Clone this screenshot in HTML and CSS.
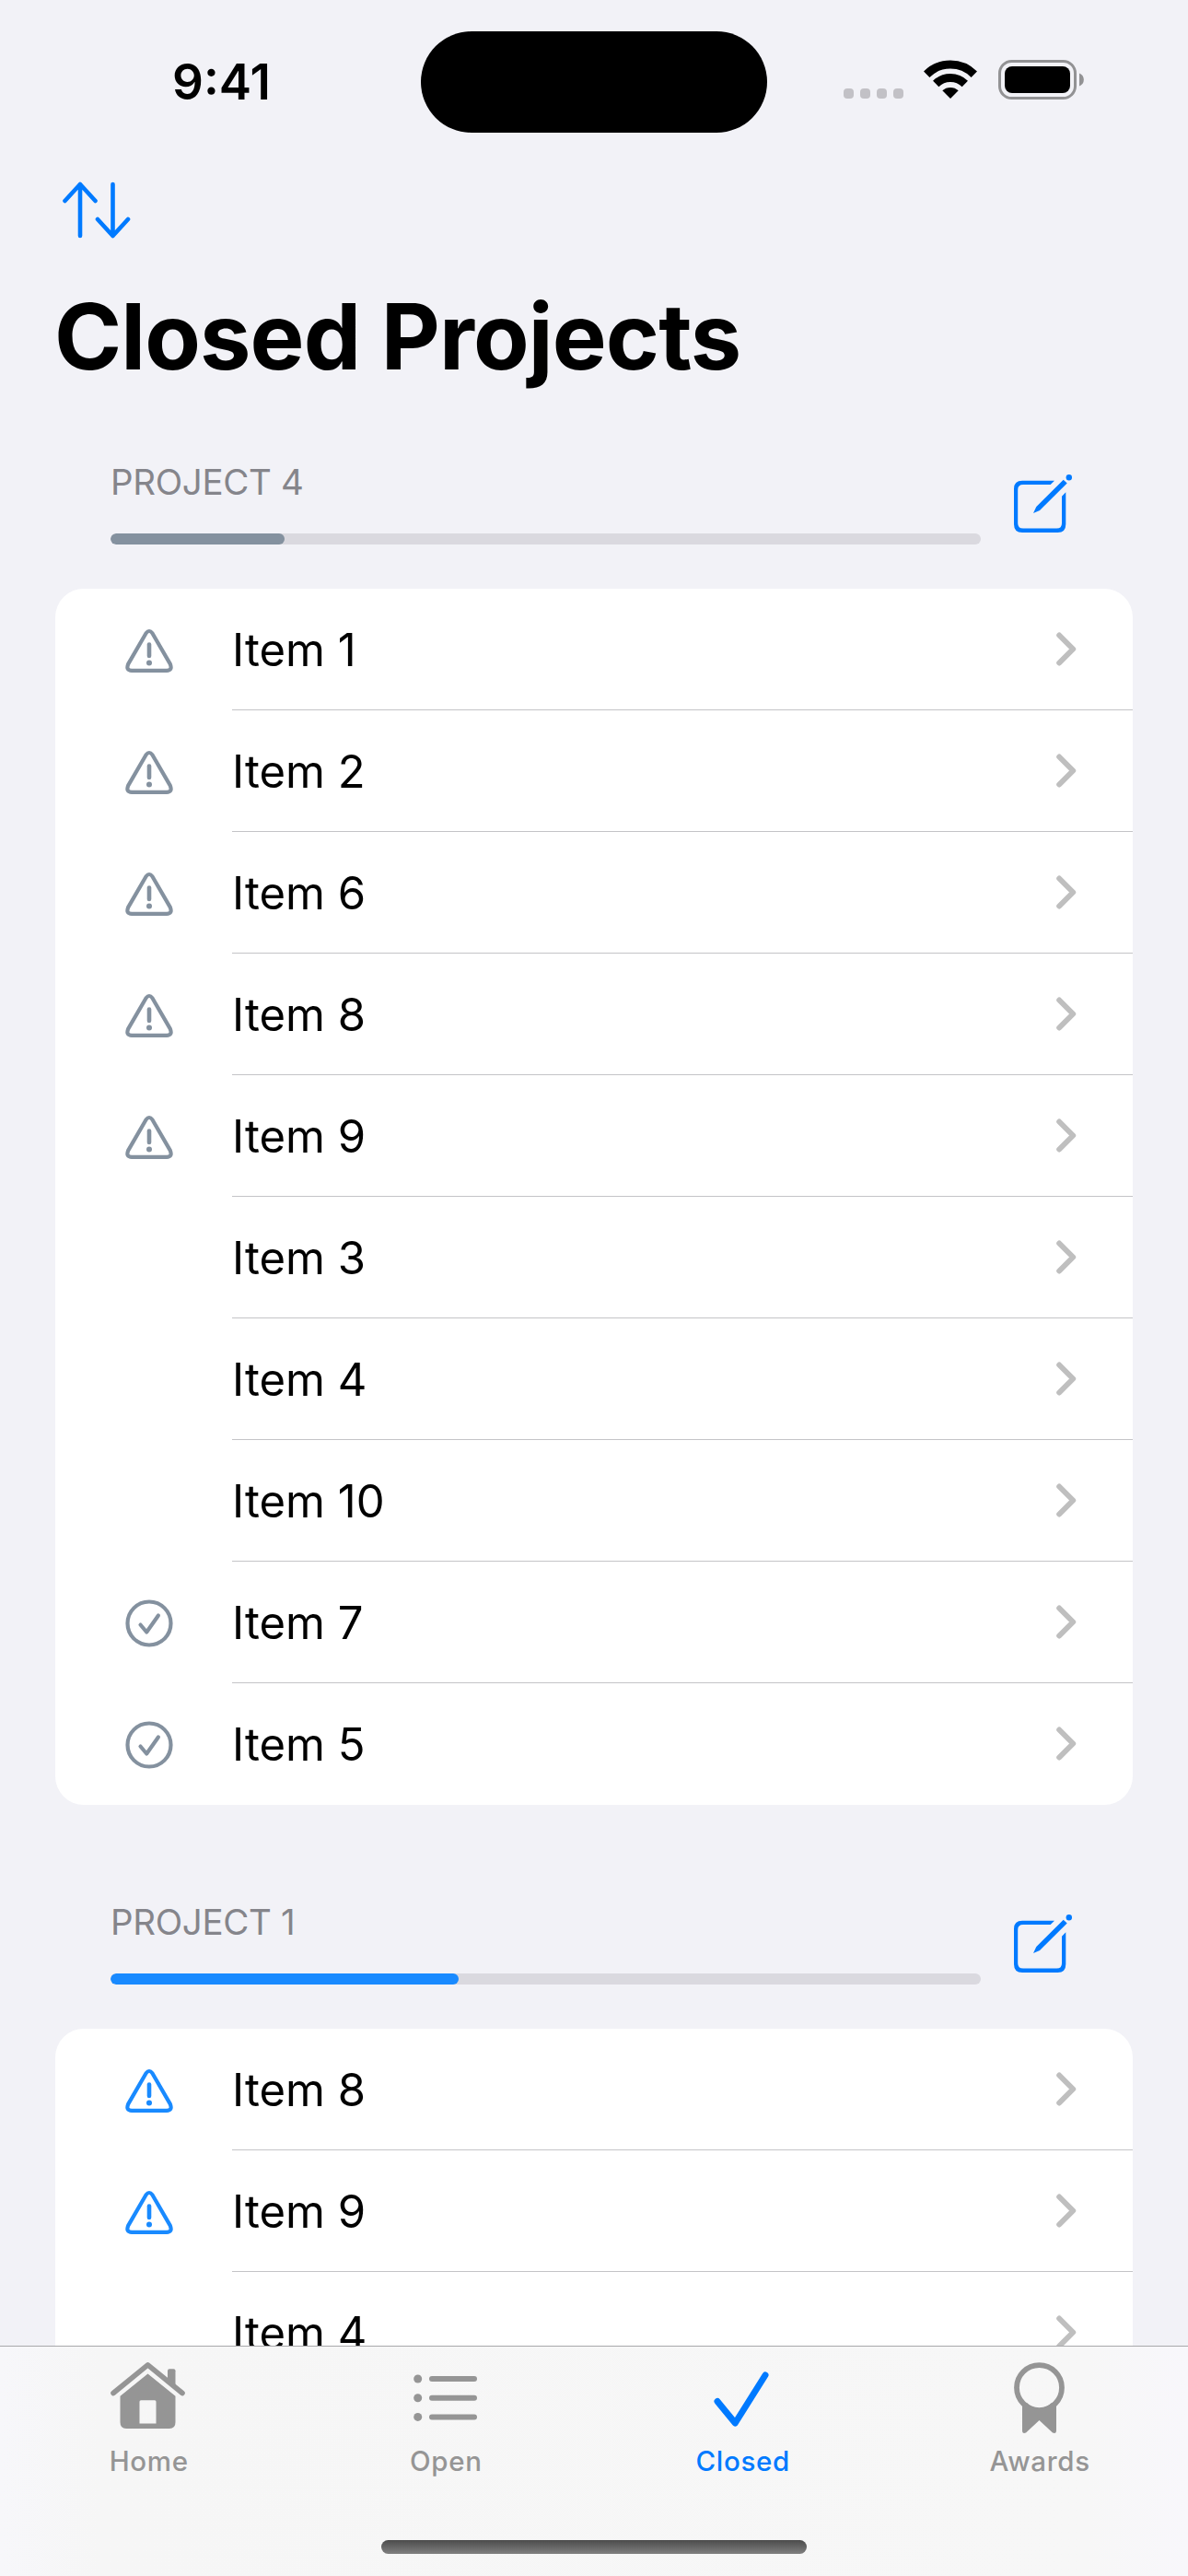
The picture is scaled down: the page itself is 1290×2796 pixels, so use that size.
FILE: index.html
```html
<!DOCTYPE html>
<html lang="en">
<head>
<meta charset="utf-8">
<title>Closed Projects</title>
<link rel="stylesheet" href="styles.css">
</head>
<body>
<svg class="defs" aria-hidden="true">
  <symbol id="warning" viewBox="0 0 54 50"><path d="M23.6 5.2 4.1 38.9Q1.5 45.7 8 45.8H46Q52.500 45.700 49.900 38.900L30.400 5.200Q27 .8 23.600 5.200Z" fill="none" stroke="currentColor" stroke-width="4.200" stroke-linejoin="round"/><path d="M27 17.500V30" stroke="currentColor" stroke-width="4.600" stroke-linecap="round"/><circle cx="27" cy="37.500" r="3" fill="currentColor"/></symbol>
  <symbol id="done" viewBox="0 0 54 54"><circle cx="27" cy="27" r="23.500" fill="none" stroke="currentColor" stroke-width="4.200"/><path d="m17.500 28.500 6.700 8 12.700-18" fill="none" stroke="currentColor" stroke-width="4.200" stroke-linecap="round" stroke-linejoin="round"/></symbol>
  <symbol id="chevron" viewBox="0 0 24 38"><path d="m4.200 3.500 15 15-15 15" fill="none" stroke="currentColor" stroke-width="6" stroke-linecap="round" stroke-linejoin="round"/></symbol>
  <symbol id="compose" viewBox="0 0 66 66"><path d="M45 6.700 40.700 11H11Q5.200 11 5.200 16.500V53Q5.200 58.500 11 58.500H47.500Q53 58.500 53 53V23.800L57.300 19.300V54Q57.300 63 48.500 63H10Q1 63 1 54V15.500Q1 6.700 10 6.700Z" fill="currentColor"/><path d="m54.700 5.700 4 3.800L29 39 22 42l3.300-7z" fill="currentColor"/><circle cx="60.800" cy="3.200" r="3.200" fill="currentColor"/></symbol>
</svg>
<div class="screen">
  <header class="status">
    <div class="time">9:41</div>
    <div class="island"></div>
    <div class="indicators">
      <div class="signal"><i></i><i></i><i></i><i></i></div>
      <svg class="wifi" viewBox="0 0 58 43"><g fill="none" stroke="#000" stroke-width="9"><path d="M3.200 15.700a36.500 36.500 0 0 1 51.600 0"/><path d="M13.200 26a22.500 22.500 0 0 1 31.600 0"/></g><path d="M20.300 33.300a13 13 0 0 1 17.400 0L29 42z"/></svg>
      <svg class="battery" viewBox="0 0 95 43"><rect x="1.500" y="1.500" width="82" height="40" rx="13" fill="none" stroke="#929294" stroke-width="3"/><rect x="7" y="7" width="71" height="29" rx="8"/><path d="M88 14.500a7.500 7.500 0 0 1 0 14z" fill="#929294"/></svg>
    </div>
  </header>
  <nav class="toolbar"><svg class="sort" viewBox="0 0 76 62"><path d="M20 59V3M3.500 21 20 3l16.500 18M55.500 3v56M39 41l16.500 18L72 41" fill="none" stroke="currentColor" stroke-width="4.600" stroke-linecap="round" stroke-linejoin="round"/></svg></nav>
  <h1 class="title">Closed Projects</h1>
  <main class="list">
    <section class="project gray">
      <div class="head"><div class="meta"><h2 class="name">PROJECT 4</h2><div class="track"><div class="fill" style="width:20%"></div></div></div><svg class="edit"><use href="#compose"/></svg></div>
      <ul class="card">
        <li class="row"><svg class="state"><use href="#warning"/></svg><div class="cell"><span>Item 1</span><svg class="chev"><use href="#chevron"/></svg></div></li>
        <li class="row"><svg class="state"><use href="#warning"/></svg><div class="cell"><span>Item 2</span><svg class="chev"><use href="#chevron"/></svg></div></li>
        <li class="row"><svg class="state"><use href="#warning"/></svg><div class="cell"><span>Item 6</span><svg class="chev"><use href="#chevron"/></svg></div></li>
        <li class="row"><svg class="state"><use href="#warning"/></svg><div class="cell"><span>Item 8</span><svg class="chev"><use href="#chevron"/></svg></div></li>
        <li class="row"><svg class="state"><use href="#warning"/></svg><div class="cell"><span>Item 9</span><svg class="chev"><use href="#chevron"/></svg></div></li>
        <li class="row"><div class="cell"><span>Item 3</span><svg class="chev"><use href="#chevron"/></svg></div></li>
        <li class="row"><div class="cell"><span>Item 4</span><svg class="chev"><use href="#chevron"/></svg></div></li>
        <li class="row"><div class="cell"><span>Item 10</span><svg class="chev"><use href="#chevron"/></svg></div></li>
        <li class="row"><svg class="state done"><use href="#done"/></svg><div class="cell"><span>Item 7</span><svg class="chev"><use href="#chevron"/></svg></div></li>
        <li class="row"><svg class="state done"><use href="#done"/></svg><div class="cell"><span>Item 5</span><svg class="chev"><use href="#chevron"/></svg></div></li>
      </ul>
    </section>
    <section class="project blue">
      <div class="head"><div class="meta"><h2 class="name">PROJECT 1</h2><div class="track"><div class="fill" style="width:40%"></div></div></div><svg class="edit"><use href="#compose"/></svg></div>
      <ul class="card">
        <li class="row"><svg class="state"><use href="#warning"/></svg><div class="cell"><span>Item 8</span><svg class="chev"><use href="#chevron"/></svg></div></li>
        <li class="row"><svg class="state"><use href="#warning"/></svg><div class="cell"><span>Item 9</span><svg class="chev"><use href="#chevron"/></svg></div></li>
        <li class="row"><div class="cell"><span>Item 4</span><svg class="chev"><use href="#chevron"/></svg></div></li>
      </ul>
    </section>
  </main>
  <footer class="tabbar">
    <div class="tabs">
      <div class="tab"><svg class="glyph" viewBox="0 0 90 80"><path d="M7 35.500 44.500 4.800 82 35.500" fill="none" stroke="currentColor" stroke-width="5.600" stroke-linecap="round" stroke-linejoin="round"/><path d="M66 23V11.300q0-2 2-2h4.500q2 0 2 2V30z" fill="currentColor"/><path fill="currentColor" fill-rule="evenodd" d="M44.500 14.500 74.500 38.700V67q0 7-6.500 7H21Q14.500 74 14.500 67V38.700zM37 43.300q-1.500 0-1.500 1.500v23.700h18V44.800q0-1.500-1.500-1.500z"/></svg><span>Home</span></div>
      <div class="tab"><svg class="glyph" viewBox="0 0 90 80"><g fill="currentColor"><circle cx="14.700" cy="20" r="4.500"/><circle cx="14.700" cy="40.700" r="4.500"/><circle cx="14.700" cy="61.400" r="4.500"/></g><path d="M30 20h46M30 40.700h46M30 61.400h46" stroke="currentColor" stroke-width="6" stroke-linecap="round"/></svg><span>Open</span></div>
      <div class="tab active"><svg class="glyph" viewBox="0 0 90 80"><path d="M18 44.500 37.300 68 70 16" fill="none" stroke="currentColor" stroke-width="7" stroke-linecap="round" stroke-linejoin="round"/></svg><span>Closed</span></div>
      <div class="tab"><svg class="glyph" viewBox="0 0 90 80"><circle cx="44.500" cy="29.600" r="24.500" fill="none" stroke="currentColor" stroke-width="5.800"/><path d="M26 46h5q13 12 27 0h5v30q0 4-4 2.500L44.500 65 30 78.500q-4 1.500-4-2.500z" fill="currentColor"/></svg><span>Awards</span></div>
    </div>
    <div class="handle"></div>
  </footer>
</div>
</body>
</html>
```
FILE: styles.css
```css
* { box-sizing: border-box; margin: 0; padding: 0; }
body { background: #f2f2f7; font-family: Inter, "Liberation Sans", sans-serif; color: #000; }
svg { display: block; flex: none; overflow: visible; }
.defs { position: absolute; width: 0; height: 0; }
.screen { width: 1290px; height: 2796px; overflow: hidden; display: flex; flex-direction: column; background: #f2f2f7; }

.status { flex: none; height: 178px; padding-top: 33px; display: grid; grid-template-columns: 457px 376px 1fr; align-items: start; }
.time { padding: 24px 0 0 187px; font-size: 53px; font-weight: 600; line-height: 64px; letter-spacing: 0; }
.island { height: 110px; margin-top: 1px; border-radius: 55px; background: #000; }
.indicators { display: flex; padding: 32px 0 0 83px; }
.signal { display: flex; gap: 7px; padding-top: 31px; width: 65px; height: 42px; margin-right: 22px; }
.signal i { width: 11px; height: 11px; border-radius: 4px; background: #c2c1c6; }
.wifi { width: 58px; height: 43px; margin-right: 22.5px; }
.battery { width: 95px; height: 43px; }

.toolbar { flex: none; height: 118px; padding: 19px 0 0 67px; color: #007aff; }
.sort { width: 76px; height: 62px; }
.title { flex: none; height: 169px; padding-left: 59px; font-size: 99px; font-weight: 700; line-height: 138px; letter-spacing: -0.9px; }

.list { flex: 1; min-height: 0; overflow: hidden; }
.project { height: 1563px; }
.gray { --tint: #84919f; }
.blue { --tint: #198aff; }
.head { display: flex; height: 174px; padding-left: 120px; }
.meta { width: 945px; margin-right: 35px; padding-top: 34px; }
.name { height: 80px; font-size: 38.500px; font-weight: 400; line-height: 48px; letter-spacing: -0.35px; color: #85858b; }
.track { height: 12px; border-radius: 6px; background: #dad9df; overflow: hidden; }
.fill { height: 12px; border-radius: 6px; background: var(--tint); }
.edit { width: 66px; height: 66px; margin-top: 50px; color: #007aff; }
.card { margin: 0 60px; border-radius: 31px; background: #fff; list-style: none; overflow: hidden; }
.row { display: flex; align-items: center; justify-content: flex-end; height: 132px; }
.state { width: 54px; height: 50px; margin: 3px 63px 0 0; color: var(--tint); }
.state.done { height: 54px; margin-top: 2px; }
.cell { width: 978px; height: 132px; display: flex; align-items: center; justify-content: space-between; padding: 3px 60px 0 0; border-bottom: 1px solid #c4c4c7; font-size: 49px; line-height: 60px; }
.row:last-child .cell { border-bottom-color: transparent; }
.chev { width: 24px; height: 38px; margin-bottom: 2px; color: #bfbfbf; }

.tabbar { flex: none; height: 250px; border-top: 1px solid #a8a8ab; background: linear-gradient(90deg, #f7f7fa 0, #f6f6f6 110px, #f7f7f7 1180px, #f8f7fb 100%); display: flex; flex-direction: column; align-items: center; }
.tabs { width: 100%; height: 210px; display: grid; grid-template-columns: repeat(4, 1fr); }
.tab { display: flex; flex-direction: column; align-items: center; padding-top: 15px; color: #959595; font-size: 29.500px; font-weight: 500; line-height: 36px; letter-spacing: 0.7px; }
.tab span { padding-left: 1px; }
.tab.active { color: #007aff; }
.glyph { width: 90px; height: 80px; margin-bottom: 11px; }
.handle { width: 462px; height: 15px; border-radius: 8px; background: linear-gradient(#4b4b4b, #808080); }
```
